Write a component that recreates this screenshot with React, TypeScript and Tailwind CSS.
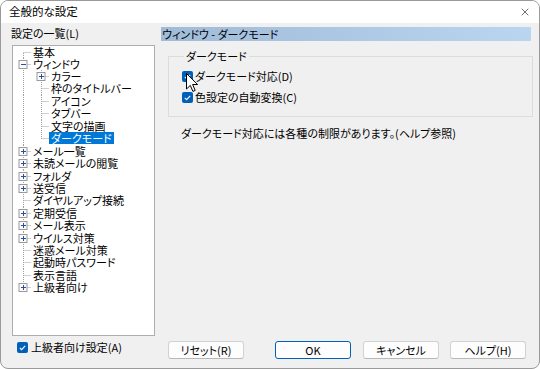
import { X } from 'lucide-react'

type TreeItem = {
  label: string
  level: 0 | 1
  exp?: 'plus' | 'minus'
  h: 12 | 13
  first?: boolean
  last?: boolean
  selected?: boolean
}

const treeItems: TreeItem[] = [
  { label: '基本', level: 0, h: 12, first: true },
  { label: 'ウィンドウ', level: 0, h: 12, exp: 'minus' },
  { label: 'カラー', level: 1, h: 12, exp: 'plus' },
  { label: '枠のタイトルバー', level: 1, h: 13 },
  { label: 'アイコン', level: 1, h: 12 },
  { label: 'タブバー', level: 1, h: 13 },
  { label: '文字の描画', level: 1, h: 12 },
  { label: 'ダークモード', level: 1, h: 13, last: true, selected: true },
  { label: 'メール一覧', level: 0, h: 12, exp: 'plus' },
  { label: '未読メールの閲覧', level: 0, h: 13, exp: 'plus' },
  { label: 'フォルダ', level: 0, h: 12, exp: 'plus' },
  { label: '送受信', level: 0, h: 12, exp: 'plus' },
  { label: 'ダイヤルアップ接続', level: 0, h: 13 },
  { label: '定期受信', level: 0, h: 12, exp: 'plus' },
  { label: 'メール表示', level: 0, h: 13, exp: 'plus' },
  { label: 'ウイルス対策', level: 0, h: 12, exp: 'plus' },
  { label: '迷惑メール対策', level: 0, h: 12 },
  { label: '起動時パスワード', level: 0, h: 13 },
  { label: '表示言語', level: 0, h: 12 },
  { label: '上級者向け', level: 0, h: 12, exp: 'plus', last: true },
]

const dot = { stroke: '#a0a0a0', strokeWidth: 1, strokeDasharray: '1 1' }

function Expander({ cx, kind }: { cx: number; kind: 'plus' | 'minus' }) {
  return (
    <g>
      <rect x={cx - 4} y={2.5} width={8} height={8} fill="#fbfbfb" stroke="#9a9a9a" />
      <line x1={cx - 2} y1={6.5} x2={cx + 3} y2={6.5} stroke="#2c4f9e" />
      {kind === 'plus' && <line x1={cx + 0.5} y1={4} x2={cx + 0.5} y2={9} stroke="#2c4f9e" />}
    </g>
  )
}

function Connector({ item }: { item: TreeItem }) {
  const w = 18 * (item.level + 1)
  const h = item.h
  const col = 18 * item.level + 10.5
  return (
    <svg width={w} height={h} className="shrink-0">
      {item.level === 1 && <line x1={10.5} y1={0} x2={10.5} y2={h} {...dot} />}
      <line
        x1={col}
        y1={item.first ? 7 : 0}
        x2={col}
        y2={item.last && item.level === 0 ? 6 : item.last ? 7 : h}
        {...dot}
      />
      <line x1={col} y1={6.5} x2={col + 8} y2={6.5} {...dot} />
      {item.exp && <Expander cx={col - 0.5} kind={item.exp} />}
    </svg>
  )
}

function Check() {
  return (
    <span className="flex h-[11px] w-[11px] shrink-0 items-center justify-center rounded-[2px] bg-[#005fb8]">
      <svg width="9" height="9" viewBox="0 0 9 9">
        <path d="M1.8 4.8 L3.6 6.6 L7.2 2.8" fill="none" stroke="white" strokeWidth="1.1" />
      </svg>
    </span>
  )
}

function DlgButton({ label, primary, className }: { label: string; primary?: boolean; className?: string }) {
  return (
    <button
      type="button"
      className={`flex h-[18px] w-[76px] items-center justify-center rounded-[3px] border bg-[#fdfdfd] text-[11px] leading-none ${
        primary ? 'border-[#005fb8] shadow-[inset_0_0_0_1px_#ffffff]' : 'border-[#d2d2d2] border-b-[#b8b8b8]'
      } ${className ?? ''}`}
    >
      {label}
    </button>
  )
}

export default function App() {
  return (
    <div className="flex h-[369px] w-[540px] flex-col overflow-hidden rounded-[8px] border border-[#9a9a9a] bg-[#f0f0f0] font-['Noto_Sans_CJK_JP',sans-serif] text-[11px] text-black [font-feature-settings:'palt']">
      <div className="flex h-[22px] shrink-0 items-center justify-between bg-white pl-[8px] pr-[8px]">
        <span className="text-[11.5px] leading-none">全般的な設定</span>
        <X className="h-[12px] w-[12px] text-[#222]" strokeWidth={1.3} />
      </div>

      <div className="flex flex-1 pl-[10px]">
        <div className="flex w-[145px] flex-col pt-[3px]">
          <div className="h-[14px] leading-[14px]">設定の一覧(L)</div>
          <div className="ml-[1px] mt-[5px] h-[291px] w-[143px] border border-[#adadad] bg-white">
            <div className="flex flex-col">
              {treeItems.map((item) => (
                <div key={item.label} className={`flex items-center ${item.h === 13 ? 'h-[13px]' : 'h-[12px]'}`}>
                  <Connector item={item} />
                  <span
                    className={`self-start whitespace-nowrap px-[2px] ${
                      item.selected ? 'h-[12px] bg-[#0078d7] leading-[12px] text-white' : 'leading-[12px]'
                    }`}
                  >
                    {item.label}
                  </span>
                </div>
              ))}
            </div>
          </div>
          <div className="ml-[6px] mt-[6px] flex h-[11px] items-center gap-[3px]">
            <Check />
            <span className="leading-none">上級者向け設定(A)</span>
          </div>
        </div>

        <div className="ml-[4px] flex flex-1 flex-col pb-[9px]">
          <div className="ml-[1px] mt-[4px] h-[14px] w-[370px] bg-gradient-to-r from-[#9fbbd8] to-[#b9d5ef] pl-[1px] leading-[14px]">
            ウィンドウ - ダークモード
          </div>

          <fieldset className="ml-[8px] mt-[7px] w-[365px] border border-[#dcdcdc] pb-[13px] pl-[13px]">
            <legend className="ml-[2px] h-[16px] px-[2px] leading-[16px]">ダークモード</legend>
            <div className="relative mt-[7px] flex h-[11px] items-center gap-[2px]">
              <Check />
              <span className="leading-none">ダークモード対応(D)</span>
              <svg width="13" height="20" viewBox="0 0 13 20" className="absolute left-[4px] top-[2px]">
                <path
                  d="M0.5 0.5 L0.5 16 L4.3 12.4 L6.9 18.4 L9.2 17.4 L6.6 11.5 L11.6 11.5 Z"
                  fill="white"
                  stroke="black"
                  strokeWidth="1"
                  strokeLinejoin="round"
                />
              </svg>
            </div>
            <div className="mt-[10px] flex h-[11px] items-center gap-[2px]">
              <Check />
              <span className="leading-none">色設定の自動変換(C)</span>
            </div>
          </fieldset>

          <div className="ml-[21px] mt-[9px] h-[14px] leading-[14px]">
            ダークモード対応には各種の制限があります。(ヘルプ参照)
          </div>

          <div className="mt-auto flex">
            <DlgButton label="リセット(R)" className="ml-[8px]" />
            <DlgButton label="OK" primary className="ml-[31px]" />
            <DlgButton label="キャンセル" className="ml-[12px]" />
            <DlgButton label="ヘルプ(H)" className="ml-[11px]" />
          </div>
        </div>
      </div>
    </div>
  )
}
